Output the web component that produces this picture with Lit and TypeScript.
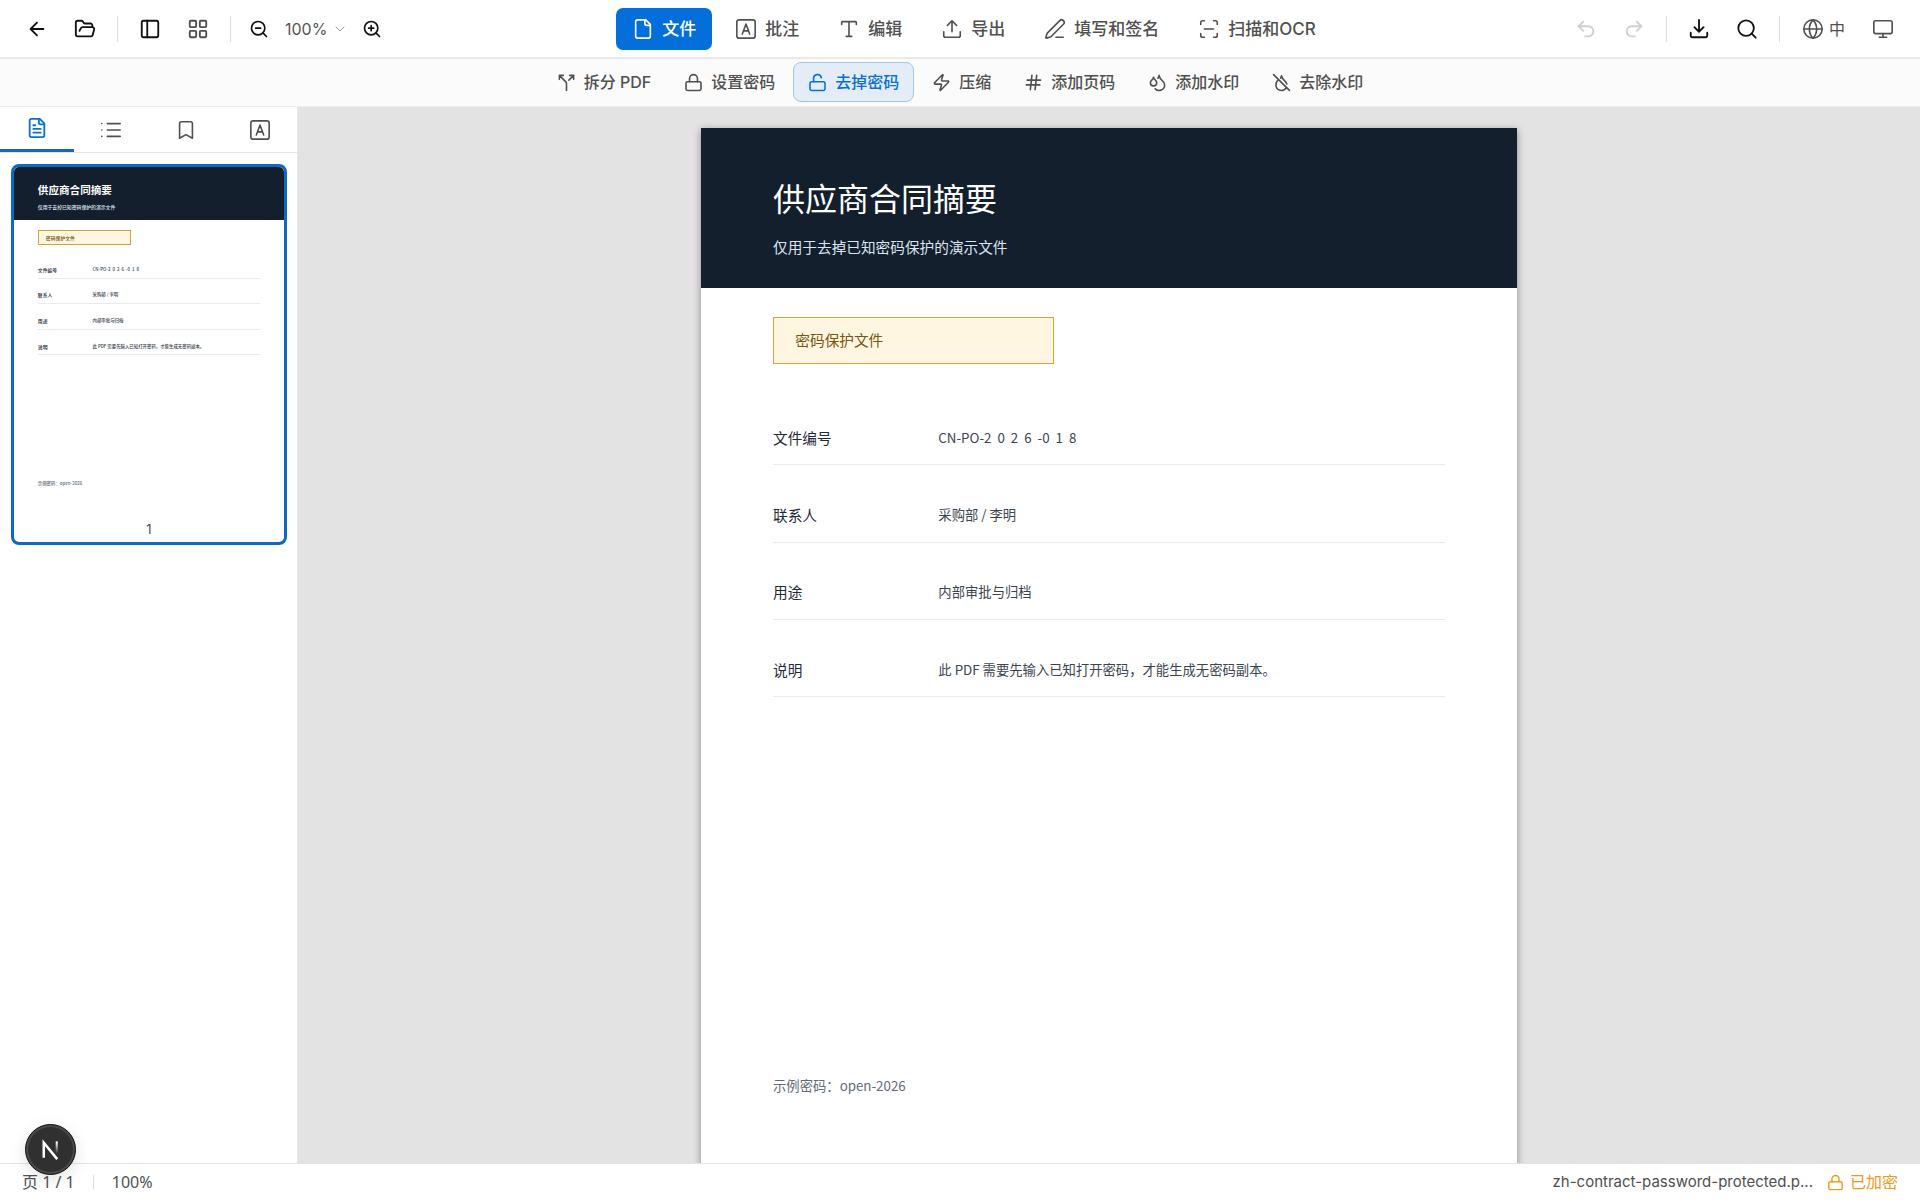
import { LitElement, html, css, svg, SVGTemplateResult } from "lit";
import { customElement, property, state } from "lit/decorators.js";
import { classMap } from "lit/directives/class-map.js";
import { styleMap } from "lit/directives/style-map.js";

const ICONS: Record<string, SVGTemplateResult> = {
  back: svg`<path d="m12 19-7-7 7-7M19 12H5"/>`,
  folder: svg`<path d="m6 14 1.5-2.9A2 2 0 0 1 9.24 10H20a2 2 0 0 1 1.94 2.5l-1.54 6a2 2 0 0 1-1.95 1.5H4a2 2 0 0 1-2-2V5a2 2 0 0 1 2-2h3.9a2 2 0 0 1 1.69.9l.81 1.2a2 2 0 0 0 1.67.9H18a2 2 0 0 1 2 2v2"/>`,
  panel: svg`<rect x="3" y="3" width="18" height="18" rx="2"/><path d="M9 3v18"/>`,
  grid: svg`<rect x="3" y="3" width="7" height="7" rx="1"/><rect x="14" y="3" width="7" height="7" rx="1"/><rect x="14" y="14" width="7" height="7" rx="1"/><rect x="3" y="14" width="7" height="7" rx="1"/>`,
  zoomOut: svg`<circle cx="11" cy="11" r="8"/><path d="m21 21-4.35-4.35M8 11h6"/>`,
  zoomIn: svg`<circle cx="11" cy="11" r="8"/><path d="m21 21-4.35-4.35M11 8v6M8 11h6"/>`,
  chevron: svg`<path d="m4 8 8 8 8-8"/>`,
  file: svg`<path d="M15 2H6a2 2 0 0 0-2 2v16a2 2 0 0 0 2 2h12a2 2 0 0 0 2-2V7Z"/><path d="M14 2v4a2 2 0 0 0 2 2h4"/>`,
  annotate: svg`<rect x="2" y="2" width="20" height="20" rx="2.5"/><path d="m8 17.5 4-11 4 11M9.3 14h5.4"/>`,
  type: svg`<path d="M12 4v16M4 7V5a1 1 0 0 1 1-1h14a1 1 0 0 1 1 1v2M9 20h6"/>`,
  upload: svg`<path d="M12 3v12M17 8l-5-5-5 5M21 15v4a2 2 0 0 1-2 2H5a2 2 0 0 1-2-2v-4"/>`,
  pen: svg`<path d="M13 21h8M21.17 6.81a1 1 0 0 0-3.98-3.98L3.84 16.17a2 2 0 0 0-.5.83l-1.32 4.35a.5.5 0 0 0 .62.62l4.35-1.32a2 2 0 0 0 .83-.5z"/>`,
  scan: svg`<path d="M3 7V5a2 2 0 0 1 2-2h2M17 3h2a2 2 0 0 1 2 2v2M21 17v2a2 2 0 0 1-2 2h-2M7 21H5a2 2 0 0 1-2-2v-2M7 12h10"/>`,
  undo: svg`<path d="M9 14 4 9l5-5"/><path d="M4 9h10.5a5.5 5.5 0 0 1 0 11H11"/>`,
  redo: svg`<path d="m15 14 5-5-5-5"/><path d="M20 9H9.5a5.5 5.5 0 0 0 0 11H13"/>`,
  download: svg`<path d="M12 2v13M7 10l5 5 5-5M21 16v3a2 2 0 0 1-2 2H5a2 2 0 0 1-2-2v-3"/>`,
  search: svg`<circle cx="11" cy="11" r="8.5"/><path d="m21.5 21.5-4.4-4.4"/>`,
  globe: svg`<circle cx="12" cy="12" r="10"/><path d="M12 2a14.5 14.5 0 0 0 0 20 14.5 14.5 0 0 0 0-20M2 12h20"/>`,
  monitor: svg`<rect x="2" y="3" width="20" height="14" rx="2"/><path d="M8 21h8M12 17v4"/>`,
  split: svg`<path d="M16 3h5v5M8 3H3v5M12 22v-8.3a4 4 0 0 0-1.17-2.87L3 3M15 9l6-6"/>`,
  lock: svg`<rect x="2.5" y="11" width="19" height="11" rx="2"/><path d="M7 11V7a5 5 0 0 1 10 0v4"/>`,
  unlock: svg`<rect x="2.5" y="11" width="19" height="11" rx="2"/><path d="M7 11V7a5 5 0 0 1 9.9-1"/>`,
  zap: svg`<path d="M4 14a1 1 0 0 1-.78-1.63l9.9-10.2a.5.5 0 0 1 .86.46l-1.92 6.02A1 1 0 0 0 13 10h7a1 1 0 0 1 .78 1.63l-9.9 10.2a.5.5 0 0 1-.86-.46l1.92-6.02A1 1 0 0 0 11 14z"/>`,
  hash: svg`<path d="M4 9h17M3 15h17M10 3 8 21M16 3l-2 18"/>`,
  drops: svg`<path d="M7 16.3c2.2 0 4-1.83 4-4.05 0-1.16-.57-2.26-1.71-3.19S7.29 6.75 7 5.3c-.29 1.45-1.14 2.84-2.29 3.76S3 11.1 3 12.25c0 2.22 1.8 4.05 4 4.05z"/><path d="M12.56 6.6A10.97 10.97 0 0 0 14 3.02c.5 2.5 2 4.9 4 6.5s3 3.5 3 5.5a6.98 6.98 0 0 1-11.91 4.97"/>`,
  dropOff: svg`<path d="M18.7 13.9c-.5-1.6-1.5-2.9-2.7-3.9-2-1.6-3.5-4-4-6.5a12 12 0 0 1-1.1 3.1M7.8 8.8C6 10.3 5 13 5 15a7 7 0 0 0 13.2 3.2M2 2l20 20"/>`,
  fileText: svg`<path d="M15 2H6a2 2 0 0 0-2 2v16a2 2 0 0 0 2 2h12a2 2 0 0 0 2-2V7Z"/><path d="M14 2v4a2 2 0 0 0 2 2h4M10 9H8M16 13H8M16 17H8"/>`,
  list: svg`<path d="M8 5h14M8 12h14M8 19h14M2 5h.01M2 12h.01M2 19h.01"/>`,
  bookmark: svg`<path d="m19 21-7-4-7 4V5a2 2 0 0 1 2-2h10a2 2 0 0 1 2 2z"/>`,
};

const icon = (name: string, size = 22, stroke = 2) => html`
  <svg width=${size} height=${size} viewBox="0 0 24 24" fill="none" stroke="currentColor"
    stroke-width=${stroke} stroke-linecap="round" stroke-linejoin="round" aria-hidden="true">${ICONS[name]}</svg>`;

/** Page width in points; the sheet is laid out in points and zoomed to its place. */
const SHEET_WIDTH = 612;

const FIELDS = [
  ["文件编号", "CN-PO-2  0  2  6  -0  1  8"],
  ["联系人", "采购部 / 李明"],
  ["用途", "内部审批与归档"],
  ["说明", "此 PDF 需要先输入已知打开密码，才能生成无密码副本。"],
];

@customElement("pdf-sheet")
export class PdfSheet extends LitElement {
  @property({ type: Number }) width = 816;

  static styles = css`
    :host { display: block; text-align: left; }
    .sheet {
      display: flex;
      flex-direction: column;
      box-sizing: border-box;
      width: 612px;
      height: 792px;
      padding-bottom: 66px;
      background: #fff;
      color: #1f2937;
      font-family: "Noto Sans CJK SC", sans-serif;
      font-size: 11px;
      line-height: 16px;
    }
    .cover {
      box-sizing: border-box;
      height: 120px;
      padding: 36px 54px 0;
      background: #141f2d;
      color: #fff;
    }
    .title { margin: 0 0 13px; font-size: 24px; line-height: 32px; font-weight: 400; }
    .preview { font-weight: 500; }
    .preview .title { font-weight: 700; }
    .subtitle { margin: 0; color: #dbe4f0; }
    .notice {
      box-sizing: border-box;
      width: 211px;
      height: 35px;
      margin: 22px 0 18px 54px;
      padding: 8px 16px;
      border: 1px solid #d4a62f;
      background: #fef6e0;
      color: #7a5410;
    }
    .fields, .fields tbody { display: block; }
    .fields { margin: 0 54px; }
    .fields tr {
      display: flex;
      box-sizing: border-box;
      height: 58px;
      padding-top: 29px;
      border-bottom: 1px solid #e8eaed;
    }
    .fields th, .fields td { padding: 0; text-align: left; font-weight: inherit; }
    .fields th { flex: none; width: 124px; }
    .fields td { font-size: 10px; color: #3b4450; white-space: pre; }
    .hint { margin: auto 54px 0; font-size: 10px; color: #626a76; }
  `;

  render() {
    return html`
      <article class=${classMap({ sheet: true, preview: this.width < SHEET_WIDTH })}
        style=${styleMap({ zoom: String(this.width / SHEET_WIDTH) })}>
        <header class="cover">
          <h1 class="title">供应商合同摘要</h1>
          <p class="subtitle">仅用于去掉已知密码保护的演示文件</p>
        </header>
        <div class="notice">密码保护文件</div>
        <table class="fields">
          <tbody>
            ${FIELDS.map(([k, v]) => html`<tr><th scope="row">${k}</th><td>${v}</td></tr>`)}
          </tbody>
        </table>
        <p class="hint">示例密码：open-2026</p>
      </article>`;
  }
}

const MODES = [
  ["file", "文件"],
  ["annotate", "批注"],
  ["type", "编辑"],
  ["upload", "导出"],
  ["pen", "填写和签名"],
  ["scan", "扫描和OCR"],
];

const TOOLS = [
  ["split", "拆分 PDF"],
  ["lock", "设置密码"],
  ["unlock", "去掉密码"],
  ["zap", "压缩"],
  ["hash", "添加页码"],
  ["drops", "添加水印"],
  ["dropOff", "去除水印"],
];

const TABS = [
  ["fileText", "缩略图"],
  ["list", "目录"],
  ["bookmark", "书签"],
  ["annotate", "批注列表"],
];

@customElement("app-root")
export class AppRoot extends LitElement {
  @state() private mode = "文件";
  @state() private tool = "去掉密码";
  @state() private tab = "缩略图";

  static styles = css`
    :host {
      display: grid;
      grid-template-rows: auto auto minmax(0, 1fr) auto;
      height: 100vh;
      background: #fff;
      color: #505050;
      font-family: Inter, "Noto Sans CJK SC", sans-serif;
      font-size: 16px;
      line-height: 24px;
    }
    svg { display: block; flex: none; }
    button, select {
      margin: 0;
      border: 0;
      background: none;
      color: inherit;
      font: inherit;
      cursor: pointer;
    }
    button { display: flex; align-items: center; justify-content: center; padding: 0; white-space: nowrap; }
    .topbar {
      display: flex;
      align-items: center;
      justify-content: space-between;
      padding: 8px 15px 7px;
      border-bottom: 2px solid #e9e9e9;
    }
    .group { display: flex; align-items: center; gap: 4px; }
    .icon-btn { width: 44px; height: 42px; }
    .narrow { width: 36px; }
    .dark { color: #111; }
    .icon-btn:disabled { color: #cfcfcf; cursor: default; }
    .rule { width: 1px; height: 26px; margin: 0 6px; background: #dedede; }
    .zoom { display: flex; align-items: center; gap: 6px; padding: 0 4px; color: #555; }
    .zoom select { appearance: none; padding: 0; }
    .zoom svg { color: #999; }
    .lang { gap: 5px; height: 42px; padding: 0 12px; }
    .modes { display: flex; gap: 7px; padding-right: 6px; }
    .mode {
      gap: 8px;
      height: 42px;
      padding: 0 16px;
      border-radius: 7px;
      font-size: 17px;
      font-weight: 500;
    }
    .mode.active { background: #046fdb; color: #fff; }
    .toolbar {
      display: flex;
      justify-content: center;
      gap: 3px;
      padding: 3px 0 4px;
      border-bottom: 1px solid #ededed;
      background: #fbfbfb;
    }
    .tool {
      gap: 8px;
      height: 40px;
      padding: 0 14px;
      border: 1px solid transparent;
      border-radius: 8px;
      font-weight: 500;
    }
    .tool.active { border-color: #9fc6ee; background: #e3ecf7; color: #0a70d6; }
    .body { display: grid; grid-template-columns: 298px minmax(0, 1fr); min-height: 0; }
    .side { border-right: 1px solid #e6e6e6; background: #fff; }
    .tabs { display: grid; grid-template-columns: repeat(4, 1fr); border-bottom: 1px solid #e6e6e6; }
    .tab { height: 45px; }
    .tab.active { border-bottom: 3px solid #0c69c8; color: #0a70d6; }
    .thumbs { padding: 11px; }
    .thumb {
      display: block;
      width: 276px;
      box-sizing: border-box;
      overflow: hidden;
      border: 3px solid #0c69c8;
      border-radius: 8px;
      background: #fff;
    }
    .thumb-no { display: block; font-size: 13px; line-height: 26px; text-align: center; }
    .viewer {
      display: flex;
      justify-content: center;
      align-items: flex-start;
      overflow: auto;
      scrollbar-width: none;
      padding-top: 21px;
      background: #e3e3e3;
    }
    .paper { flex: none; box-shadow: 0 2px 8px rgba(0, 0, 0, 0.4); }
    .status {
      display: flex;
      align-items: center;
      justify-content: space-between;
      padding: 6px 22px;
      border-top: 1px solid #e3e3e3;
    }
    .status-group { display: flex; align-items: center; gap: 18px; }
    .figures { font-family: "Noto Sans", "Noto Sans CJK SC", sans-serif; }
    .status-rule { width: 1px; height: 14px; background: #dedede; }
    .right { gap: 14px; }
    .filename { font-size: 15px; }
    .locked { display: flex; align-items: center; gap: 6px; color: #f09a1a; }
    .badge {
      position: fixed;
      left: 25px;
      bottom: 25px;
      width: 51px;
      height: 51px;
      border: 1px solid #111;
      border-radius: 50%;
      background: #303030;
      box-shadow: inset 0 0 0 2px #4a4a4a, 0 4px 16px rgba(0, 0, 0, 0.12);
    }
  `;

  render() {
    return html`
      <header class="topbar">
        <div class="group">
          <button class="icon-btn dark" aria-label="返回">${icon("back")}</button>
          <button class="icon-btn dark" aria-label="打开">${icon("folder")}</button>
          <span class="rule"></span>
          <button class="icon-btn dark" aria-label="侧边栏">${icon("panel")}</button>
          <button class="icon-btn" aria-label="网格">${icon("grid")}</button>
          <span class="rule"></span>
          <button class="icon-btn narrow dark" aria-label="缩小">${icon("zoomOut", 20)}</button>
          <label class="zoom">
            <select aria-label="缩放"><option>100%</option></select>${icon("chevron", 12)}
          </label>
          <button class="icon-btn narrow dark" aria-label="放大">${icon("zoomIn", 20)}</button>
        </div>
        <nav class="modes">
          ${MODES.map(([name, label]) => html`
            <button class=${classMap({ mode: true, active: this.mode === label })}
              @click=${() => (this.mode = label)}>${icon(name, 22, 1.75)}<span>${label}</span></button>`)}
        </nav>
        <div class="group">
          <button class="icon-btn" disabled aria-label="撤销">${icon("undo")}</button>
          <button class="icon-btn" disabled aria-label="重做">${icon("redo")}</button>
          <span class="rule"></span>
          <button class="icon-btn dark" aria-label="下载">${icon("download")}</button>
          <button class="icon-btn dark" aria-label="搜索">${icon("search")}</button>
          <span class="rule"></span>
          <button class="lang" aria-label="语言">${icon("globe", 22, 1.75)}<span>中</span></button>
          <button class="icon-btn" aria-label="显示">${icon("monitor", 22, 1.75)}</button>
        </div>
      </header>
      <nav class="toolbar">
        ${TOOLS.map(([name, label]) => html`
          <button class=${classMap({ tool: true, active: this.tool === label })}
            @click=${() => (this.tool = label)}>${icon(name, 19)}<span>${label}</span></button>`)}
      </nav>
      <div class="body">
        <aside class="side">
          <div class="tabs" role="tablist">
            ${TABS.map(([name, label]) => html`
              <button role="tab" aria-label=${label} aria-selected=${this.tab === label}
                class=${classMap({ tab: true, active: this.tab === label })}
                @click=${() => (this.tab = label)}>${icon(name, 22, this.tab === label ? 2 : 1.75)}</button>`)}
          </div>
          <div class="thumbs">
            <button class="thumb" aria-label="第 1 页">
              <pdf-sheet .width=${270}></pdf-sheet>
              <span class="thumb-no">1</span>
            </button>
          </div>
        </aside>
        <main class="viewer">
          <pdf-sheet class="paper" .width=${816}></pdf-sheet>
        </main>
      </div>
      <footer class="status">
        <div class="status-group figures">
          <span>页 1 / 1</span>
          <span class="status-rule"></span>
          <span>100%</span>
        </div>
        <div class="status-group right">
          <span class="filename">zh-contract-password-protected.p...</span>
          <span class="locked">${icon("lock", 17)}<span>已加密</span></span>
        </div>
      </footer>
      <button class="badge" aria-label="开发工具">
        <svg width="49" height="49" viewBox="0 0 51 51" fill="none" aria-hidden="true">
          <defs>
            <linearGradient id="fade" x1="0" y1="18" x2="0" y2="30" gradientUnits="userSpaceOnUse">
              <stop stop-color="#fff" /><stop offset="1" stop-color="#fff" stop-opacity="0" />
            </linearGradient>
          </defs>
          <path d="M18.500 34V18.500L32.500 35.500" stroke="#fff" stroke-width="2.600" />
          <path d="M32 17v13" stroke="url(#fade)" stroke-width="2.200" />
        </svg>
      </button>`;
  }
}
